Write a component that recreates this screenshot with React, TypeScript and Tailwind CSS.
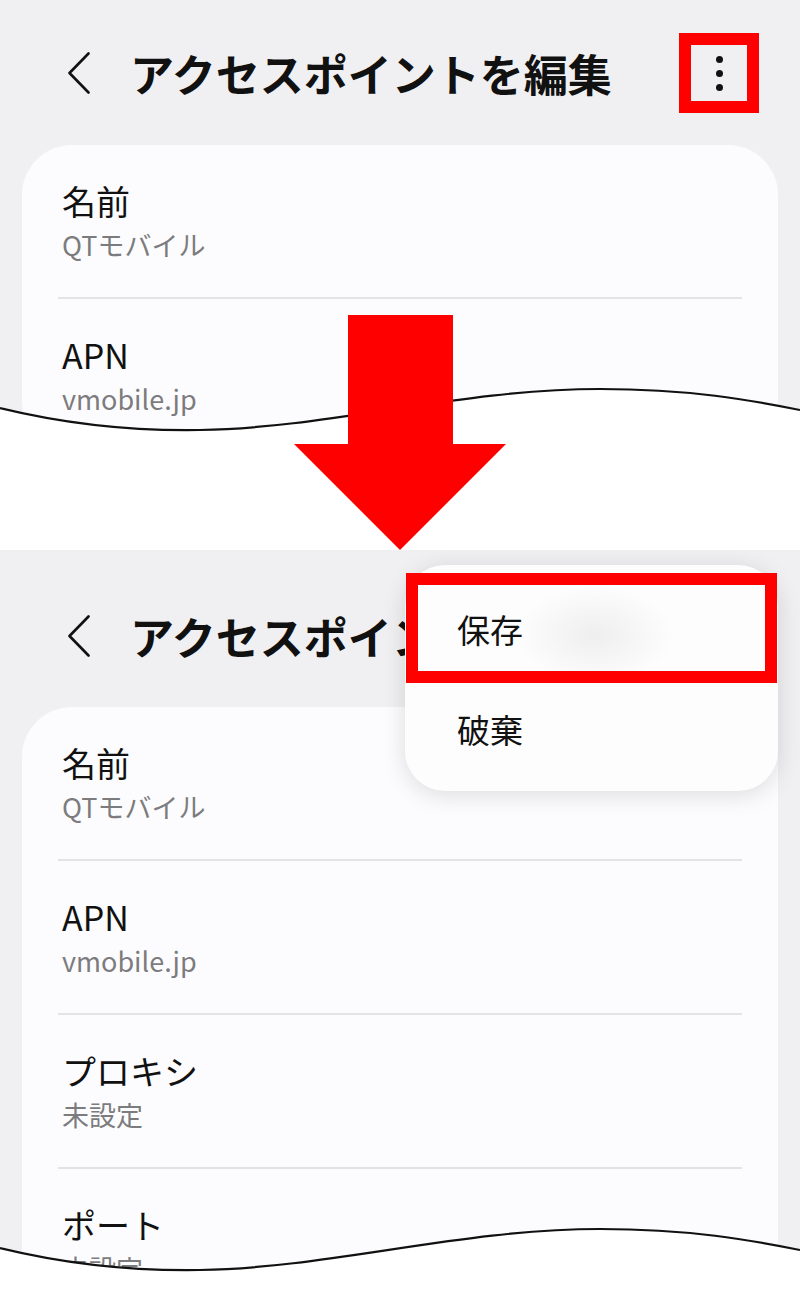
import React from 'react';

interface Campo {
  nome: string;
  valor: string;
}

const camposTopo: Campo[] = [
  { nome: '名前', valor: 'QTモバイル' },
  { nome: 'APN', valor: 'vmobile.jp' },
];

const camposBase: Campo[] = [
  { nome: '名前', valor: 'QTモバイル' },
  { nome: 'APN', valor: 'vmobile.jp' },
  { nome: 'プロキシ', valor: '未設定' },
  { nome: 'ポート', valor: '未設定' },
];

// mesma curva usada nas duas bordas rasgadas
const curva = 'M0,28 C70,45 140,51 200,50 C330,48 460,9 600,9 C690,9 750,20 800,30';

const Rasgo: React.FC<{ className: string; altura: number }> = ({ className, altura }) => (
  <svg
    className={`absolute left-0 ${className}`}
    width="800"
    height={altura}
    viewBox={`0 0 800 ${altura}`}
  >
    <path d={`${curva} L800,${altura} L0,${altura} Z`} fill="#ffffff" />
    <path d={curva} fill="none" stroke="#111111" strokeWidth="2.2" />
  </svg>
);

const Cabecalho: React.FC<{ destaque?: boolean }> = ({ destaque }) => (
  <div className="flex h-[80px] items-center pl-[68px] pr-[41px]">
    <svg width="22" height="42" viewBox="0 0 22 42" className="shrink-0">
      <polyline
        points="20.5,1.5 1.5,21 20.5,40.5"
        fill="none"
        stroke="#111111"
        strokeWidth="2.6"
        strokeLinecap="round"
        strokeLinejoin="round"
      />
    </svg>
    <h1 className="ml-[40px] flex-1 whitespace-nowrap text-[44px] font-bold leading-none text-[#111111]">
      アクセスポイントを編集
    </h1>
    <div
      className={`flex h-[80px] w-[80px] shrink-0 flex-col items-center justify-center gap-[7px] border-[12px] ${
        destaque ? 'border-[#ff0000]' : 'border-transparent'
      }`}
    >
      <span className="h-[7px] w-[7px] rounded-full bg-[#111111]" />
      <span className="h-[7px] w-[7px] rounded-full bg-[#111111]" />
      <span className="h-[7px] w-[7px] rounded-full bg-[#111111]" />
    </div>
  </div>
);

const Cartao: React.FC<{ campos: Campo[]; className: string }> = ({ campos, className }) => (
  <div className={`mx-[22px] rounded-[50px] bg-[#fcfcfe] ${className}`}>
    {campos.map((campo, i) => (
      <div key={campo.nome + i}>
        {i > 0 && <div className="mx-[36px] h-[2px] bg-[#e3e3e6]" />}
        <div className="flex h-[152px] flex-col justify-center pl-[40px]">
          <span className="text-[34px] leading-[40px] text-[#111111]">{campo.nome}</span>
          <span className="mt-[7px] text-[27px] leading-[34px] text-[#7c7c7e]">{campo.valor}</span>
        </div>
      </div>
    ))}
  </div>
);

const App: React.FC = () => {
  return (
    <div className="w-[800px] bg-white font-['Noto_Sans_CJK_JP',sans-serif]">
      {/* Antes: tela de edição com o menu de opções */}
      <section className="relative h-[550px] overflow-hidden bg-[#f0f0f3]">
        <div className="pt-[33px]">
          <Cabecalho destaque />
        </div>
        <Cartao campos={camposTopo} className="mt-[32px]" />
        <Rasgo className="top-[380px]" altura={170} />

        {/* seta vermelha */}
        <svg className="absolute left-[294px] top-[315px]" width="213" height="235" viewBox="0 0 213 235">
          <polygon points="54,0 159,0 159,129 212,129 106,235 0,129 54,129" fill="#ff0000" />
        </svg>
      </section>

      {/* Depois: menu aberto por cima do cabeçalho */}
      <section className="relative h-[750px] overflow-hidden bg-[#f0f0f3]">
        <div className="pt-[46px]">
          <Cabecalho />
        </div>
        <Cartao campos={camposBase} className="mt-[31px]" />

        <div className="absolute left-[405px] top-[15px] h-[226px] w-[373px] rounded-[40px] bg-[#fdfdfd] pt-[15px] shadow-[0_4px_24px_rgba(0,0,0,0.13)]">
          {/* marca do toque sobre "保存" */}
          <div className="absolute left-[110px] top-[20px] h-[100px] w-[160px] bg-[radial-gradient(ellipse_at_center,rgba(0,0,0,0.06),rgba(0,0,0,0)_70%)]" />
          <div className="relative flex h-[100px] items-center pl-[52px] text-[33px] text-[#111111]">保存</div>
          <div className="relative flex h-[100px] items-center pl-[52px] text-[33px] text-[#111111]">破棄</div>
          <div className="absolute left-[1px] top-[8px] h-[110px] w-[371px] border-[12px] border-[#ff0000]" />
        </div>

        <Rasgo className="top-[670px]" altura={80} />
      </section>
    </div>
  );
};

export default App;
